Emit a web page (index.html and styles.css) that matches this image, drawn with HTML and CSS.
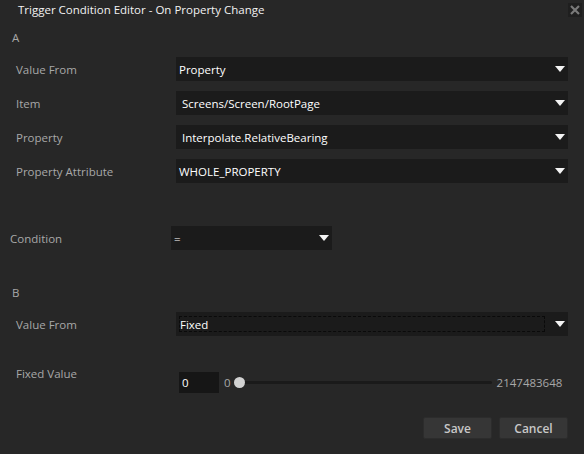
FILE: index.html
```html
<!DOCTYPE html>
<html>
<head>
<meta charset="utf-8">
<link rel="stylesheet" href="styles.css">
</head>
<body>
<div class="dialog">
  <div class="titlebar">
    <span class="title">Trigger Condition Editor - On Property Change</span>
    <span class="close"><svg width="10" height="10" viewBox="0 0 10 10"><path d="M1 1 L9 9 M9 1 L1 9" stroke="#7a7a7a" stroke-width="2.2"/></svg></span>
  </div>

  <div class="section-head">A</div>
  <div class="form">
    <div class="label">Value From</div>
    <div class="select"><span class="val">Property</span><span class="arrow"></span></div>
    <div class="label">Item</div>
    <div class="select"><span class="val indent">Screens/Screen/RootPage</span><span class="arrow"></span></div>
    <div class="label">Property</div>
    <div class="select"><span class="val indent">Interpolate.RelativeBearing</span><span class="arrow"></span></div>
    <div class="label">Property Attribute</div>
    <div class="select"><span class="val">WHOLE_PROPERTY</span><span class="arrow"></span></div>
  </div>

  <div class="condition">
    <div class="label">Condition</div>
    <div class="select small"><span class="val">=</span><span class="arrow"></span></div>
  </div>

  <div class="section-head b">B</div>
  <div class="form b-form">
    <div class="label">Value From</div>
    <div class="select"><span class="val focus">Fixed</span><span class="arrow"></span></div>
  </div>

  <div class="fixed-row">
    <div class="label">Fixed Value</div>
    <div class="slider-area">
      <div class="num-input">0</div>
      <span class="min">0</span>
      <div class="track"><span class="thumb"></span></div>
      <span class="max">2147483648</span>
    </div>
  </div>

  <div class="buttons">
    <button class="btn">Save</button>
    <button class="btn">Cancel</button>
  </div>
</div>
</body>
</html>
```

FILE: styles.css
```css
html, body {
  margin: 0;
  padding: 0;
  background: #272727;
}
body {
  width: 584px;
  height: 454px;
  overflow: hidden;
  font-family: "Open Sans", "Noto Sans", sans-serif;
  font-size: 11.5px;
  color: #a8a8a8;
}
.dialog {
  display: flex;
  flex-direction: column;
}
.titlebar {
  height: 20px;
  display: flex;
  align-items: center;
  justify-content: space-between;
  padding-left: 18px;
  padding-right: 2px;
}
.title {
  color: #f2f2f2;
  line-height: 18px;
}
.close {
  width: 14px;
  height: 14px;
  background: #1f1f1f;
  display: flex;
  align-items: center;
  justify-content: center;
}
.section-head {
  height: 20px;
  line-height: 20px;
  margin-top: 8px;
  padding-left: 12px;
  color: #a8a8a8;
}
.form {
  display: grid;
  grid-template-columns: 160px 392px;
  row-gap: 10px;
  padding-left: 16px;
  margin-top: 9px;
  align-items: center;
}
.select {
  height: 24px;
  background: #1b1b1b;
  display: flex;
  align-items: center;
  justify-content: space-between;
  padding-right: 3px;
  box-sizing: border-box;
}
.val {
  color: #ffffff;
  padding-left: 3px;
}
.val.indent {
  padding-left: 6px;
}
.arrow {
  width: 0;
  height: 0;
  border-left: 5px solid transparent;
  border-right: 5px solid transparent;
  border-top: 6px solid #f4f4f4;
}
.condition {
  display: grid;
  grid-template-columns: 161px 161px;
  padding-left: 10px;
  margin-top: 43px;
  align-items: center;
}
.section-head.b {
  margin-top: 33px;
}
.b-form .select {
  padding-left: 3px;
}
.val.focus {
  flex: 1;
  margin-right: 10px;
  height: 16px;
  line-height: 15px;
  padding-left: 0;
  border: 1px dashed #0a0a0a;
  box-sizing: border-box;
}
.fixed-row {
  display: grid;
  grid-template-columns: 163px 390px;
  padding-left: 16px;
  margin-top: 30px;
}
.fixed-row .label {
  line-height: 16px;
}
.slider-area {
  margin-top: 6px;
  display: flex;
  align-items: center;
  height: 21px;
}
.num-input {
  width: 40px;
  height: 21px;
  background: #161616;
  color: #fff;
  line-height: 21px;
  padding-left: 3px;
  box-sizing: border-box;
}
.min {
  margin-left: 5px;
}
.track {
  position: relative;
  width: 253px;
  height: 3px;
  background: #1a1a1a;
  margin-left: 8px;
  border-radius: 2px;
}
.thumb {
  position: absolute;
  left: -5px;
  top: -4px;
  width: 11px;
  height: 11px;
  border-radius: 50%;
  background: #d2d2d2;
}
.max {
  margin-left: 5px;
}
.buttons {
  display: flex;
  justify-content: flex-end;
  gap: 7px;
  padding-right: 16px;
  margin-top: 24px;
}
.btn {
  width: 69px;
  height: 22px;
  background: #363636;
  border: 1px solid #2c2c2c;
  border-radius: 2px;
  color: #c8c8c8;
  font-family: inherit;
  font-size: 12px;
  font-weight: 600;
  padding: 0;
}
```
